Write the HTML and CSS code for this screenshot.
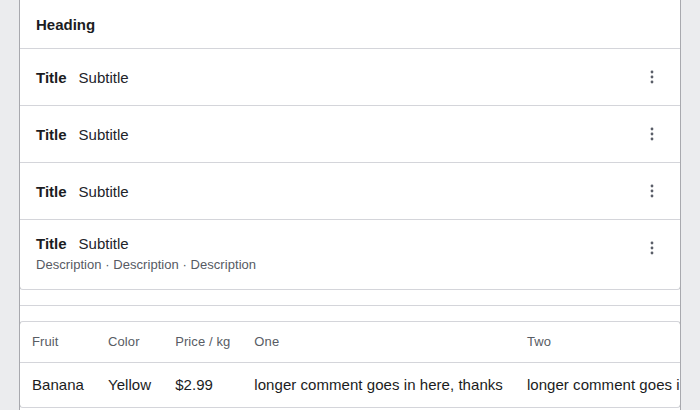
FILE: index.html
```html
<!DOCTYPE html>
<html>
<head>
<meta charset="utf-8">
<link rel="stylesheet" href="styles.css">
</head>
<body>
<div class="page">
  <section class="card list-card">
    <div class="heading">Heading</div>
    <div class="row">
      <div class="main"><span class="title">Title</span><span class="subtitle">Subtitle</span></div>
      <button class="kebab" aria-label="More"><svg width="28" height="28" viewBox="0 0 28 28"><circle cx="14" cy="9" r="1.4"/><circle cx="14" cy="14" r="1.4"/><circle cx="14" cy="19" r="1.4"/></svg></button>
    </div>
    <div class="row">
      <div class="main"><span class="title">Title</span><span class="subtitle">Subtitle</span></div>
      <button class="kebab" aria-label="More"><svg width="28" height="28" viewBox="0 0 28 28"><circle cx="14" cy="9" r="1.4"/><circle cx="14" cy="14" r="1.4"/><circle cx="14" cy="19" r="1.4"/></svg></button>
    </div>
    <div class="row">
      <div class="main"><span class="title">Title</span><span class="subtitle">Subtitle</span></div>
      <button class="kebab" aria-label="More"><svg width="28" height="28" viewBox="0 0 28 28"><circle cx="14" cy="9" r="1.4"/><circle cx="14" cy="14" r="1.4"/><circle cx="14" cy="19" r="1.4"/></svg></button>
    </div>
    <div class="row has-desc">
      <div class="main">
        <div><span class="title">Title</span><span class="subtitle">Subtitle</span></div>
        <div class="desc">Description · Description · Description</div>
      </div>
      <button class="kebab" aria-label="More"><svg width="28" height="28" viewBox="0 0 28 28"><circle cx="14" cy="9" r="1.4"/><circle cx="14" cy="14" r="1.4"/><circle cx="14" cy="19" r="1.4"/></svg></button>
    </div>
  </section>
  <hr class="divider">
  <section class="card table-card">
    <table class="table">
      <thead>
        <tr><th>Fruit</th><th>Color</th><th>Price / kg</th><th>One</th><th>Two</th></tr>
      </thead>
      <tbody>
        <tr><td>Banana</td><td>Yellow</td><td>$2.99</td><td>longer comment goes in here, thanks</td><td>longer comment goes in here, thanks</td></tr>
      </tbody>
    </table>
  </section>
</div>
</body>
</html>
```
FILE: styles.css
```css
html, body {
  margin: 0;
  padding: 0;
  background: #ebecee;
  height: 100%;
  overflow: hidden;
}
body {
  padding: 0 19px;
  font-family: "Liberation Sans", Arial, Helvetica, sans-serif;
  color: #1b1c22;
}
.page {
  background: #fff;
  border-left: 1px solid #a8a9ae;
  border-right: 1px solid #a8a9ae;
  min-height: 100%;
  display: flex;
  flex-direction: column;
  gap: 15px;
  overflow: hidden;
}
.card {
  border: 1px solid #d4d5da;
  border-left-color: #a8a9ae;
  border-right-color: #a8a9ae;
  border-radius: 4px;
  margin: 0 -1px;
  background: #fff;
  overflow: hidden;
}
.list-card {
  margin-top: -5px;
}
.heading {
  font-size: 15px;
  font-weight: bold;
  line-height: 20px;
  padding: 19px 16px 13px;
  border-bottom: 1px solid #d4d5da;
}
.row {
  display: flex;
  align-items: center;
  padding: 14px 14px 14px 16px;
  border-bottom: 1px solid #d4d5da;
}
.row:last-child {
  border-bottom: none;
}
.row.has-desc {
  align-items: flex-start;
}
.main {
  flex: 1;
  font-size: 15px;
  line-height: 20px;
  padding-top: 2px;
}
.has-desc .main {
  padding-top: 0;
}
.title {
  font-weight: bold;
  margin-right: 12px;
}
.subtitle {
  color: #22232a;
}
.desc {
  font-size: 13px;
  line-height: 18px;
  letter-spacing: 0.05px;
  color: #565a63;
  margin-top: 2px;
  margin-bottom: 1px;
}
.kebab {
  width: 28px;
  height: 28px;
  padding: 0;
  border: none;
  background: none;
  display: flex;
  fill: #5a5e68;
}
.divider {
  margin: 0;
  border: none;
  border-top: 1px solid #d4d5da;
  height: 0;
}
.table {
  border-collapse: collapse;
  white-space: nowrap;
}
.table th {
  font-size: 13px;
  font-weight: normal;
  color: #585c64;
  line-height: 16px;
  letter-spacing: 0.1px;
  text-align: left;
  padding: 12px;
  border-bottom: 1px solid #d4d5da;
}
.table td {
  font-size: 15px;
  line-height: 20px;
  letter-spacing: 0.05px;
  padding: 12px;
  color: #1b1c22;
}
```
